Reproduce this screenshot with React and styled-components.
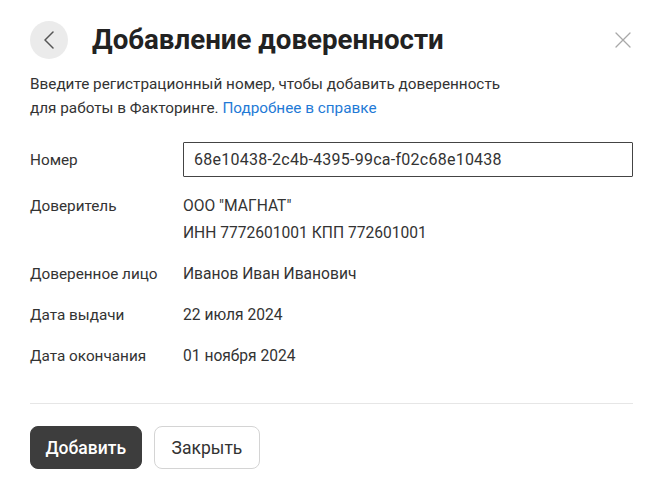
import styled, { createGlobalStyle } from "styled-components";

const Global = createGlobalStyle`
  body {
    margin: 0;
    background: #ffffff;
    font-family: Roboto, "Liberation Sans", sans-serif;
    color: #222222;
  }
`;

const Dialog = styled.div`
  width: 660px;
  box-sizing: border-box;
  padding: 21px 27px 0 30px;
`;

const Header = styled.div`
  display: flex;
  align-items: center;
  height: 38px;
`;

const BackBtn = styled.button`
  width: 38px;
  height: 38px;
  border-radius: 50%;
  border: none;
  background: #ebebeb;
  display: flex;
  align-items: center;
  justify-content: center;
  padding: 0;
  margin-right: 24px;
  color: #555555;
`;

const Title = styled.h1`
  flex: 1;
  margin: 0;
  font-size: 27.7px;
  font-weight: 700;
  color: #222222;
  line-height: 38px;
`;

const CloseBtn = styled.button`
  width: 20px;
  height: 20px;
  border: none;
  background: none;
  padding: 0;
  display: flex;
  align-items: center;
  justify-content: center;
  color: #a8a8a8;
`;

const Description = styled.p`
  margin: 13px 0 22px;
  font-size: 15.3px;
  line-height: 24px;
  color: #333333;
  max-width: 490px;
`;

const Link = styled.a`
  color: #1f7ad6;
  text-decoration: none;
`;

const Fields = styled.div`
  display: grid;
  grid-template-columns: 153px 1fr;
  row-gap: 14px;
  align-items: start;
`;

const Label = styled.div`
  font-size: 15.3px;
  line-height: 27px;
  color: #333333;
  align-self: ${(p) => (p.$center ? "center" : "start")};
`;

const Value = styled.div`
  font-size: 15.6px;
  line-height: 27px;
  color: #333333;
`;

const Input = styled.input`
  box-sizing: border-box;
  width: 100%;
  height: 35px;
  border: 1px solid #444444;
  border-radius: 1px;
  padding: 0 10px;
  font-family: inherit;
  font-size: 16px;
  letter-spacing: 0.25px;
  color: #333333;
  margin-bottom: 2px;
  outline: none;
`;

const Divider = styled.hr`
  border: none;
  border-top: 1px solid #e6e6e6;
  margin: 33px 0 22px;
`;

const Actions = styled.div`
  display: flex;
  gap: 12px;
`;

const Button = styled.button`
  height: 43px;
  padding: 0 ${(p) => (p.$primary ? 14.5 : 17)}px;
  border-radius: 8px;
  font-family: inherit;
  font-size: 17.5px;
  font-weight: ${(p) => (p.$primary ? 500 : 400)};
  color: ${(p) => (p.$primary ? "#ffffff" : "#333333")};
  background: ${(p) => (p.$primary ? "#3d3d3d" : "#ffffff")};
  border: 1px solid ${(p) => (p.$primary ? "#3d3d3d" : "#d4d4d4")};
`;

export default function App() {
  return (
    <>
      <Global />
      <Dialog>
        <Header>
          <BackBtn>
            <svg width="16" height="18" viewBox="0 0 16 18" fill="none">
              <path d="M12 1L4 9l8 8" stroke="currentColor" strokeWidth="1.5" strokeLinecap="round" strokeLinejoin="round" />
            </svg>
          </BackBtn>
          <Title>Добавление доверенности</Title>
          <CloseBtn>
            <svg width="16" height="16" viewBox="0 0 16 16" fill="none">
              <path d="M1 1l14 14M15 1L1 15" stroke="currentColor" strokeWidth="1.3" strokeLinecap="round" />
            </svg>
          </CloseBtn>
        </Header>
        <Description>
          Введите регистрационный номер, чтобы добавить доверенность для работы
          в Факторинге. <Link href="#">Подробнее в справке</Link>
        </Description>
        <Fields>
          <Label $center>Номер</Label>
          <Input defaultValue="68e10438-2c4b-4395-99ca-f02c68e10438" />
          <Label>Доверитель</Label>
          <Value>
            ООО "МАГНАТ"
            <br />
            ИНН 7772601001 КПП 772601001
          </Value>
          <Label>Доверенное лицо</Label>
          <Value>Иванов Иван Иванович</Value>
          <Label>Дата выдачи</Label>
          <Value>22 июля 2024</Value>
          <Label>Дата окончания</Label>
          <Value>01 ноября 2024</Value>
        </Fields>
        <Divider />
        <Actions>
          <Button $primary>Добавить</Button>
          <Button>Закрыть</Button>
        </Actions>
      </Dialog>
    </>
  );
}
